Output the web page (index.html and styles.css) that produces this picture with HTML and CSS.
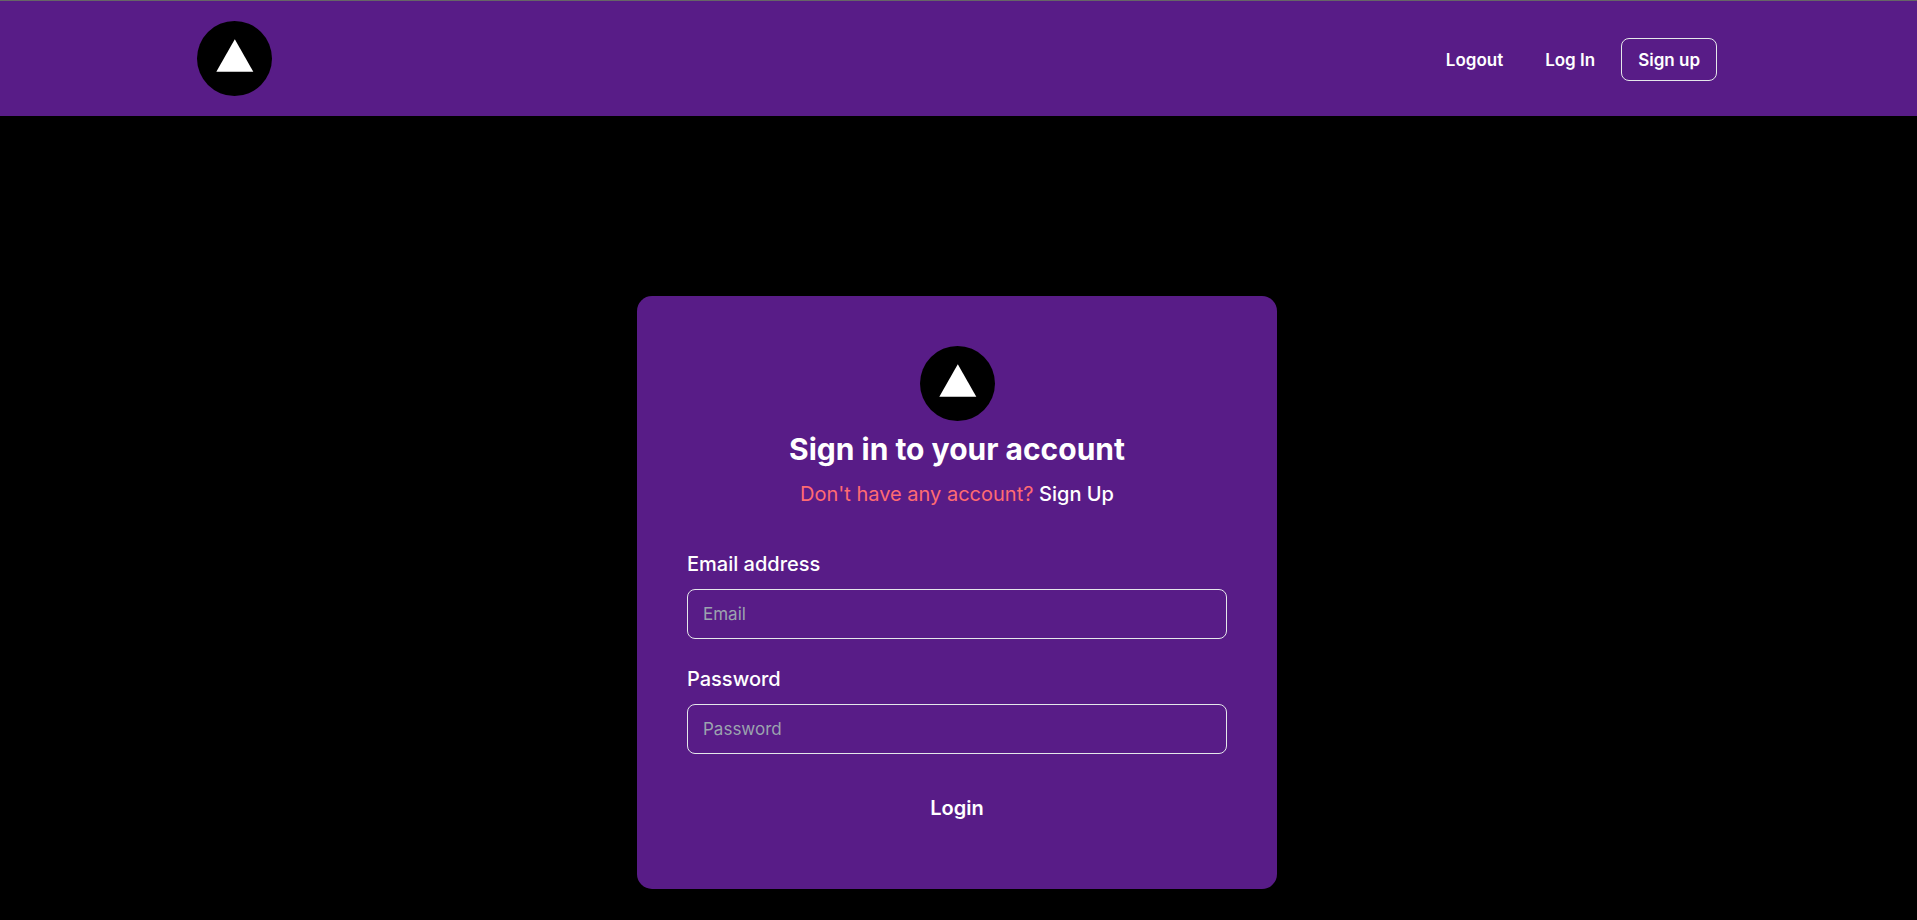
FILE: index.html
```html
<!DOCTYPE html>
<html lang="en">
<head>
<meta charset="utf-8">
<meta name="viewport" content="width=device-width, initial-scale=1">
<title>Sign in</title>
<link rel="stylesheet" href="styles.css">
</head>
<body>
<header class="header">
  <nav class="nav">
    <a class="logo-link" href="#" aria-label="Home">
      <svg class="logo" viewBox="0 0 75 75" aria-hidden="true"><circle cx="37.5" cy="37.5" r="37.5" fill="#000"/><path d="M37.8 18.3 56.3 50.8H19.3Z" fill="#fff"/></svg>
    </a>
    <div class="nav-actions">
      <button class="nav-item" type="button">Logout</button>
      <a class="nav-item" href="#">Log In</a>
      <a class="nav-item nav-item-outlined" href="#">Sign up</a>
    </div>
  </nav>
</header>
<main class="main">
  <section class="card">
    <svg class="logo" viewBox="0 0 75 75" aria-hidden="true"><circle cx="37.5" cy="37.5" r="37.5" fill="#000"/><path d="M37.8 18.3 56.3 50.8H19.3Z" fill="#fff"/></svg>
    <h1 class="title">Sign in to your account</h1>
    <p class="prompt">Don't have any account? <a class="prompt-link" href="#">Sign Up</a></p>
    <form class="form">
      <div class="field">
        <label class="label" for="email">Email address</label>
        <input class="input" id="email" type="email" placeholder="Email">
      </div>
      <div class="field">
        <label class="label" for="password">Password</label>
        <input class="input" id="password" type="password" placeholder="Password">
      </div>
      <button class="submit" type="submit">Login</button>
    </form>
  </section>
</main>
</body>
</html>
```
FILE: styles.css
```css
* {
  box-sizing: border-box;
}

body {
  margin: 0;
  background: #000;
  color: #fff;
  font-family: Inter, "Liberation Sans", sans-serif;
  font-size: 20px;
  line-height: 30px;
}

a {
  color: inherit;
  text-decoration: none;
}

button,
input {
  font: inherit;
  color: inherit;
  background: transparent;
}

.header {
  padding-right: 3px;
  border-top: 1px solid #666;
  background: #581c87;
}

.nav {
  display: flex;
  align-items: center;
  justify-content: space-between;
  max-width: 1600px;
  margin: 0 auto;
  padding: 20px 40px;
}

.logo-link {
  display: flex;
}

.logo {
  display: block;
  width: 75px;
  height: 75px;
}

.nav-actions {
  display: flex;
  align-items: center;
  gap: 10px;
  padding-top: 2px;
}

.nav-item {
  padding: 9px 16px 7px;
  border: 0;
  font-size: 17px;
  font-weight: 600;
  line-height: 25px;
  cursor: pointer;
}

.nav-item-outlined {
  border: 1px solid #e5e7eb;
  border-radius: 8px;
}

.main {
  padding: 180px 3px 30px 0;
}

.card {
  display: flex;
  flex-direction: column;
  align-items: center;
  max-width: 640px;
  margin: 0 auto;
  padding: 50px;
  border-radius: 15px;
  background: #581c87;
}

.title {
  margin: 10px 0 12px;
  font-size: 30px;
  font-weight: 700;
  line-height: 36px;
}

.prompt {
  margin: 0;
  color: #ff6b72;
}

.prompt-link {
  color: #fff;
  font-weight: 500;
}

.form {
  display: grid;
  gap: 25px;
  width: 100%;
  margin-top: 40px;
}

.field {
  display: grid;
  gap: 10px;
}

.label {
  font-weight: 500;
}

.input {
  width: 100%;
  height: 50px;
  padding: 0 15px;
  border: 1px solid #e5e7eb;
  border-radius: 8px;
  font-size: 17px;
}

.input::placeholder {
  color: #9ca3af;
  opacity: 1;
}

.submit {
  padding: 14px 15px 16px;
  border: 0;
  font-weight: 600;
  cursor: pointer;
}
```
